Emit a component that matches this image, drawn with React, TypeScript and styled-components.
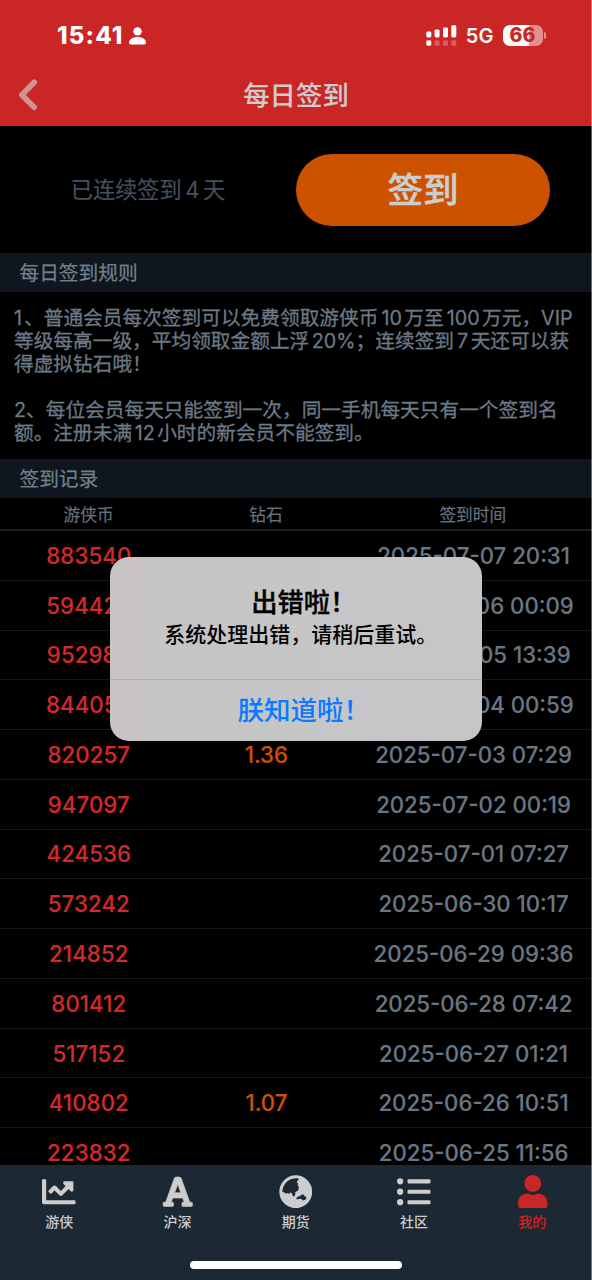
import React from "react";
import styled, { createGlobalStyle } from "styled-components";
import { FaChartLine, FaFont, FaListUl, FaUser } from "react-icons/fa";

const GlobalStyle = createGlobalStyle`
  *, *::before, *::after { box-sizing: border-box; }
  body {
    margin: 0;
    background: #000;
    font-family: Inter, "Noto Sans CJK SC", sans-serif;
    text-autospace: no-autospace;
    text-spacing-trim: space-all;
  }
`;

const Screen = styled.div`
  position: relative;
  display: flex;
  flex-direction: column;
  width: 592px;
  height: 1280px;
  overflow: hidden;
  background: #000;
  white-space: nowrap;
  &::after {
    content: "";
    position: absolute;
    top: 0;
    right: 0;
    width: 1px;
    height: 100%;
    background: rgba(255, 255, 255, 0.38);
  }
`;

const Header = styled.header`
  flex: none;
  height: 126px;
  background: #cb2626;
`;

const StatusBar = styled.div`
  display: flex;
  align-items: center;
  justify-content: space-between;
  height: 70px;
  padding: 1px 46px 0 57px;
  color: #fff;
`;

const StatusGroup = styled.div<{ $gap: number }>`
  display: flex;
  align-items: center;
  gap: ${(p) => p.$gap}px;
`;

const Clock = styled.span`
  font-size: 24px;
  font-weight: 800;
  line-height: 30px;
  letter-spacing: 1.15px;
`;

const Network = styled.span`
  font-size: 20px;
  font-weight: 600;
  line-height: 24px;
  letter-spacing: 0.1px;
`;

const Battery = styled.div`
  display: flex;
  align-items: center;
  gap: 1px;
`;

const BatteryBody = styled.div`
  display: flex;
  align-items: center;
  justify-content: center;
  width: 40px;
  height: 21px;
  border-radius: 7px;
  background: linear-gradient(90deg, #fff 66%, #e68f8f 66%);
  color: #cb2626;
  font-size: 19.5px;
  font-weight: 800;
  line-height: 21px;
`;

const BatteryNub = styled.div`
  width: 2.5px;
  height: 7px;
  border-radius: 0 3px 3px 0;
  background: #e68f8f;
`;

const NavBar = styled.div`
  display: grid;
  grid-template-columns: 56px 1fr 56px;
  align-items: center;
  height: 49px;
`;

const BackButton = styled.button`
  display: flex;
  padding: 0 0 0 18px;
  border: 0;
  background: none;
`;

const Title = styled.h1`
  margin: 0;
  color: #cdcdcd;
  font-size: 26.4px;
  font-weight: 500;
  line-height: 40px;
  text-align: center;
  -webkit-text-stroke: 0.15px currentColor;
`;

const CheckInPanel = styled.section`
  display: flex;
  flex: none;
  align-items: center;
  height: 127px;
`;

const Streak = styled.div`
  width: 296px;
  padding-bottom: 3px;
  color: #434f5d;
  font-size: 22.2px;
  text-align: center;
  -webkit-text-stroke: 0.2px currentColor;
`;

const Num = styled.span<{ $left?: number; $right?: number }>`
  margin-left: ${(p) => p.$left ?? 2.5}px;
  margin-right: ${(p) => p.$right ?? 2.5}px;
`;

const CheckInButton = styled.button`
  width: 254px;
  height: 72px;
  padding: 0;
  border: 0;
  border-radius: 36px;
  background: #cc5200;
  color: #cdcdcd;
  font-family: inherit;
  font-size: 35.6px;
  font-weight: 500;
  line-height: 73px;
  -webkit-text-stroke: 0.6px currentColor;
`;

const SectionTitle = styled.h2`
  flex: none;
  height: 39px;
  margin: 0;
  padding-left: 19.5px;
  background: #0f161e;
  color: #71808c;
  font-size: 19.7px;
  font-weight: 400;
  line-height: 40px;
  -webkit-text-stroke: 0.25px currentColor;
`;

const Rules = styled.div`
  flex: none;
  height: 167px;
  padding: 15px 0 0 14px;
  color: #6c7987;
  font-size: 19.7px;
  line-height: 23px;
  -webkit-text-stroke: 0.3px currentColor;
`;

const RuleLine = styled.div`
  height: 23px;
`;

const Table = styled.div`
  flex: 1;
  min-height: 0;
  overflow: hidden;
`;

const Row = styled.div`
  display: grid;
  grid-template-columns: 3fr 3fr 4fr;
  align-items: center;
  height: 49.77px;
  border-bottom: 1px solid #11171d;
  text-align: center;
  font-size: 22.2px;
  font-weight: 500;
  -webkit-text-stroke: 0.15px currentColor;
`;

const HeadRow = styled(Row)`
  height: 33px;
  padding-right: 1px;
  border-bottom: 2px solid #141f27;
  color: #66727f;
  font-size: 16.7px;
  font-weight: 400;
  -webkit-text-stroke: 0.2px currentColor;
`;

const Coins = styled.span`
  color: #d3292b;
  letter-spacing: 0.1px;
`;

const Diamonds = styled.span`
  color: #cc5200;
`;

const Time = styled.span`
  color: #697684;
`;

const TabBar = styled.nav`
  display: flex;
  flex: none;
  flex-direction: column;
  align-items: center;
  height: 115px;
  background: #1c2834;
`;

const Tabs = styled.div`
  display: flex;
  width: 100%;
  height: 96px;
  padding: 9.5px 0.5px 0 0;
`;

const Tab = styled.div<{ $active?: boolean }>`
  display: flex;
  flex: 1;
  flex-direction: column;
  align-items: center;
  gap: 4px;
  color: ${(p) => (p.$active ? "#cb2626" : "#cdcdcd")};
  font-size: 14px;
  font-weight: 500;
  line-height: 20px;
`;

const HomeIndicator = styled.div`
  width: 212px;
  height: 7.5px;
  border-radius: 4px;
  background: #fff;
`;

const Alert = styled.div`
  position: absolute;
  top: 557px;
  left: 109.5px;
  display: flex;
  flex-direction: column;
  width: 372.5px;
  height: 183.5px;
  border-radius: 19px;
  background: linear-gradient(90deg, #c8c3c4 0, #c6c5c6 60px, #c6c6c8 100%);
  color: #000;
`;

const AlertBody = styled.div`
  display: flex;
  flex-direction: column;
  align-items: center;
  height: 123px;
  padding-top: 29px;
  border-bottom: 1px solid #b0b0b2;
`;

const AlertTitle = styled.div`
  margin-right: -16px;
  font-size: 26.3px;
  font-weight: 500;
  line-height: 33px;
  -webkit-text-stroke: 0.35px currentColor;
`;

const AlertMessage = styled.div`
  margin-right: -10px;
  font-size: 21px;
  font-weight: 500;
  line-height: 32px;
`;

const AlertAction = styled.button`
  flex: 1;
  padding: 0 0 0 16px;
  border: 0;
  background: none;
  color: #0a7aff;
  font-family: inherit;
  font-size: 26.5px;
  font-weight: 500;
  line-height: 60px;
`;

const records = [
  ["883540", "", "2025-07-07 20:31"],
  ["594428", "", "2025-07-06 00:09"],
  ["952986", "", "2025-07-05 13:39"],
  ["844056", "", "2025-07-04 00:59"],
  ["820257", "1.36", "2025-07-03 07:29"],
  ["947097", "", "2025-07-02 00:19"],
  ["424536", "", "2025-07-01 07:27"],
  ["573242", "", "2025-06-30 10:17"],
  ["214852", "", "2025-06-29 09:36"],
  ["801412", "", "2025-06-28 07:42"],
  ["517152", "", "2025-06-27 01:21"],
  ["410802", "1.07", "2025-06-26 10:51"],
  ["223832", "", "2025-06-25 11:56"],
];

const LetterIcon = styled(FaFont)`
  stroke: currentColor;
  stroke-width: 10px;
  stroke-linejoin: round;
`;

const GlobeIcon = ({ size }: { size: number }) => (
  <svg width={size} height={size} viewBox="26 29 100 100">
    <circle cx="76" cy="79" r="49" fill="currentColor" />
    <path
      fill="#1c2834"
      d="M36 79C37 60 49 44 66 40q9-2 17-1l2 5-5 3-1 4 4 3-1 6 3 4v7l-4 6-7 3 1 6-4 8-4-3-3-8-5-2-3 5-5-3-5 2-4-4Z"
    />
    <path fill="#1c2834" d="m78 97 6-4 5-1 5-5 3 1 3-1 2 5 5 3 1 4-4 4-6 2-5-4-6-1-8 2Z" />
  </svg>
);

const tabs = [
  { label: "游侠", Icon: FaChartLine },
  { label: "沪深", Icon: LetterIcon },
  { label: "期货", Icon: GlobeIcon },
  { label: "社区", Icon: FaListUl },
  { label: "我的", Icon: FaUser },
];

const PersonIcon = () => (
  <svg width="17" height="18" viewBox="0 0 17 18" fill="#fff">
    <circle cx="8.5" cy="4.4" r="4.2" />
    <path d="M0 15.6C0 12.4 3.6 10 8.5 10s8.5 2.4 8.5 5.6c0 1.3-.7 1.9-1.9 1.9H1.9C.7 17.5 0 16.9 0 15.6Z" />
  </svg>
);

const SignalIcon = () => (
  <svg width="31" height="21" viewBox="0 0 31 21" fill="#fff">
    <rect x="0.3" y="6.4" width="5" height="6" rx="1.4" />
    <rect x="8.6" y="4.5" width="5" height="7.9" rx="1.4" />
    <rect x="17" y="2.5" width="5" height="9.9" rx="1.4" />
    <rect x="25.3" y="0.3" width="5" height="12.1" rx="1.4" />
    <rect x="0.3" y="15.3" width="5" height="5.4" rx="1.4" />
    <g opacity="0.25">
      <rect x="8.6" y="15.3" width="5" height="5.4" rx="1.4" />
      <rect x="17" y="15.3" width="5" height="5.4" rx="1.4" />
      <rect x="25.3" y="15.3" width="5" height="5.4" rx="1.4" />
    </g>
  </svg>
);

const BackIcon = () => (
  <svg
    width="20"
    height="32"
    viewBox="0 0 20 32"
    fill="none"
    stroke="#d29192"
    strokeWidth="5.6"
    strokeLinecap="round"
    strokeLinejoin="round"
  >
    <path d="M16.2 3.3 3.8 16l12.4 12.3" />
  </svg>
);

export default function App() {
  return (
    <Screen>
      <GlobalStyle />
      <Header>
        <StatusBar>
          <StatusGroup $gap={6}>
            <Clock>15:41</Clock>
            <PersonIcon />
          </StatusGroup>
          <StatusGroup $gap={9}>
            <SignalIcon />
            <Network>5G</Network>
            <Battery>
              <BatteryBody>66</BatteryBody>
              <BatteryNub />
            </Battery>
          </StatusGroup>
        </StatusBar>
        <NavBar>
          <BackButton aria-label="返回">
            <BackIcon />
          </BackButton>
          <Title>每日签到</Title>
        </NavBar>
      </Header>

      <CheckInPanel>
        <Streak>
          已连续签到<Num $left={3.5} $right={3.5}>4</Num>天
        </Streak>
        <CheckInButton>签到</CheckInButton>
      </CheckInPanel>

      <SectionTitle>每日签到规则</SectionTitle>
      <Rules>
        <RuleLine>
          <Num $left={0} $right={2}>1</Num>、普通会员每次签到可以免费领取游侠币
          <Num $left={3}>10</Num>万至<Num $left={3}>100</Num>万元，VIP
        </RuleLine>
        <RuleLine>
          等级每高一级，平均领取金额上浮<Num $right={0}>20%</Num>；连续签到
          <Num $left={3}>7</Num>天还可以获
        </RuleLine>
        <RuleLine>得虚拟钻石哦！</RuleLine>
        <RuleLine />
        <RuleLine>2、每位会员每天只能签到一次，同一手机每天只有一个签到名</RuleLine>
        <RuleLine>
          额。注册未满<Num>12</Num>小时的新会员不能签到。
        </RuleLine>
      </Rules>

      <SectionTitle>签到记录</SectionTitle>
      <Table>
        <HeadRow>
          <span>游侠币</span>
          <span>钻石</span>
          <span>签到时间</span>
        </HeadRow>
        {records.map(([coins, diamonds, time]) => (
          <Row key={time}>
            <Coins>{coins}</Coins>
            <Diamonds>{diamonds}</Diamonds>
            <Time>{time}</Time>
          </Row>
        ))}
      </Table>

      <TabBar>
        <Tabs>
          {tabs.map(({ label, Icon }) => (
            <Tab key={label} $active={label === "我的"}>
              <Icon size={33.5} />
              {label}
            </Tab>
          ))}
        </Tabs>
        <HomeIndicator />
      </TabBar>

      <Alert role="alertdialog">
        <AlertBody>
          <AlertTitle>出错啦！</AlertTitle>
          <AlertMessage>系统处理出错，请稍后重试。</AlertMessage>
        </AlertBody>
        <AlertAction>朕知道啦！</AlertAction>
      </Alert>
    </Screen>
  );
}
